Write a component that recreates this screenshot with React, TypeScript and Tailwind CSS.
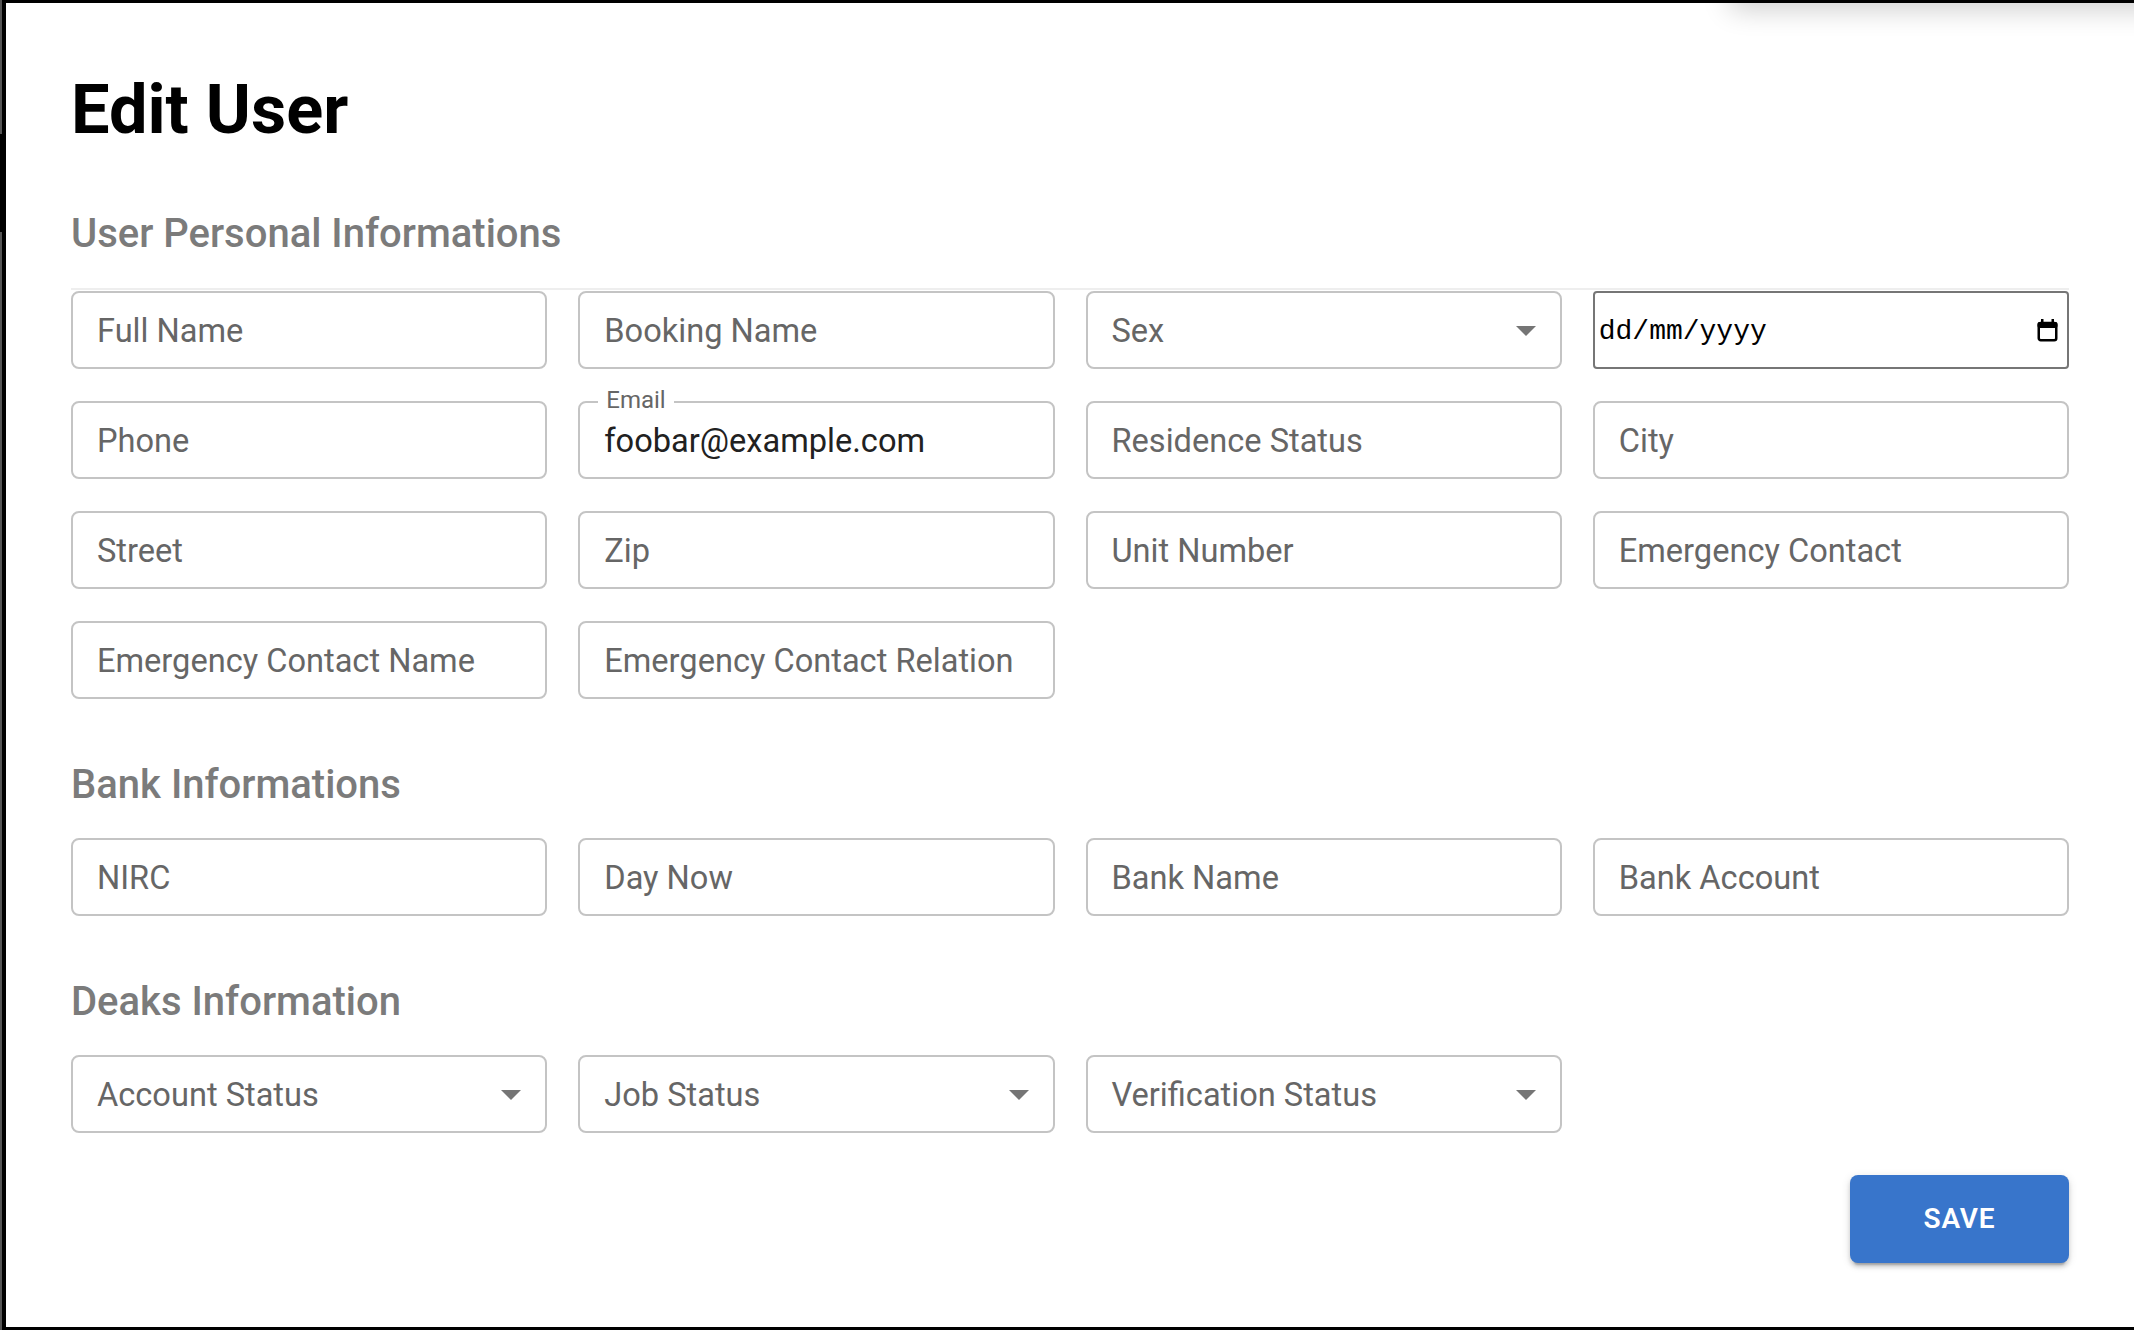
import React from "react";

function Arrow() {
  return (
    <svg
      className="absolute right-[10px] top-1/2 -translate-y-1/2"
      width="48"
      height="48"
      viewBox="0 0 24 24"
    >
      <path d="M7 10l5 5 5-5z" fill="#757575" />
    </svg>
  );
}

function Field({ label, select }: { label: string; select?: boolean }) {
  return (
    <div className="relative flex h-[78px] items-center rounded-[8px] border-2 border-[#c4c4c4] pl-[24px] pt-[2px] text-[32.6px] leading-none text-[#666666]">
      <span>{label}</span>
      {select && <Arrow />}
    </div>
  );
}

function EmailField() {
  return (
    <div className="relative flex h-[78px] items-center rounded-[8px] border-2 border-[#c4c4c4] pl-[24px] pt-[2px] text-[32.6px] leading-none text-[#212121]">
      <span className="absolute left-[18px] top-[-17px] bg-white px-[8px] text-[24px] leading-[28px] text-[#666666]">
        Email
      </span>
      <span>foobar@example.com</span>
    </div>
  );
}

function DateField() {
  return (
    <div className="flex h-[78px] items-center justify-between rounded-[4px] border-2 border-[#767676] pl-[4px] pr-[9px]">
      <span className="pt-[3px] font-['Liberation_Mono',monospace] text-[28px] leading-none text-black">
        dd/mm/yyyy
      </span>
      <svg width="21" height="24" viewBox="0 0 21 24">
        <rect x="1.75" y="5" width="17.5" height="17.25" rx="2" fill="none" stroke="black" strokeWidth="2.5" />
        <rect x="0.5" y="4" width="20" height="6" rx="2" fill="black" />
        <rect x="4" y="1" width="2.5" height="4" fill="black" />
        <rect x="14.5" y="1" width="2.5" height="4" fill="black" />
      </svg>
    </div>
  );
}

function Heading({ children, className }: { children: React.ReactNode; className?: string }) {
  return (
    <h2 className={"text-[40px] font-medium leading-[48px] text-[#7b7b7b] " + (className ?? "")}>
      {children}
    </h2>
  );
}

export default function App() {
  return (
    <div className="flex h-[1330px] w-[2134px] overflow-hidden bg-white font-[Roboto,sans-serif]">
      <div className="flex w-[2px] flex-col bg-[#555555]">
        <div className="mt-[134px] h-[98px] bg-black" />
      </div>
      <div className="relative flex flex-1 flex-col overflow-hidden border-b-[3px] border-l-[4px] border-t-[3px] border-black pl-[65px] pr-[65px]">
        <div className="absolute left-[1730px] right-[-40px] top-[-23px] h-[23px] bg-black shadow-[0_0_28px_6px_rgba(0,0,0,0.2)]" />

        <h1 className="pt-[67px] text-[68.5px] font-bold leading-[80px] text-black">Edit User</h1>

        <Heading className="mt-[60px] mb-[30px]">User Personal Informations</Heading>
        <div className="h-[2px] bg-[#eeeeee]" />
        <div className="mt-[1px] grid grid-cols-4 gap-x-[31px] gap-y-[32px]">
          <Field label="Full Name" />
          <Field label="Booking Name" />
          <Field label="Sex" select />
          <DateField />
          <Field label="Phone" />
          <EmailField />
          <Field label="Residence Status" />
          <Field label="City" />
          <Field label="Street" />
          <Field label="Zip" />
          <Field label="Unit Number" />
          <Field label="Emergency Contact" />
          <Field label="Emergency Contact Name" />
          <Field label="Emergency Contact Relation" />
        </div>

        <Heading className="mt-[62px] mb-[29px]">Bank Informations</Heading>
        <div className="grid grid-cols-4 gap-x-[31px]">
          <Field label="NIRC" />
          <Field label="Day Now" />
          <Field label="Bank Name" />
          <Field label="Bank Account" />
        </div>

        <Heading className="mt-[62px] mb-[29px]">Deaks Information</Heading>
        <div className="grid grid-cols-4 gap-x-[31px]">
          <Field label="Account Status" select />
          <Field label="Job Status" select />
          <Field label="Verification Status" select />
        </div>

        <div className="mt-[42px] flex justify-end">
          <button className="flex h-[88px] w-[219px] items-center justify-center rounded-[8px] bg-[#3875cb] text-[28px] font-semibold tracking-[0.8px] text-white shadow-[0_6px_2px_-4px_rgba(0,0,0,0.2),0_4px_4px_0_rgba(0,0,0,0.14),0_2px_10px_0_rgba(0,0,0,0.12)]">
            SAVE
          </button>
        </div>
      </div>
    </div>
  );
}
